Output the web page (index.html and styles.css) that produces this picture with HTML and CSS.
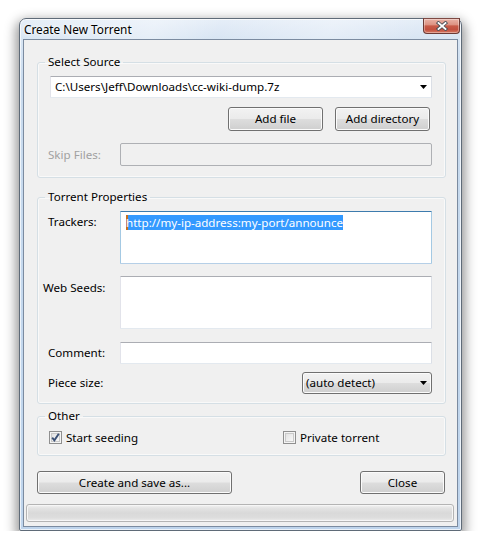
FILE: index.html
```html
<!DOCTYPE html>
<html>
<head>
<meta charset="utf-8">
<link rel="stylesheet" href="styles.css">
</head>
<body>
<div class="window">
  <div class="titlebar">
    <span class="title">Create New Torrent</span>
    <span class="close-x">
      <svg width="14" height="10" viewBox="0 0 14 10">
        <path d="M3.5 2 L10.5 8 M10.5 2 L3.5 8" stroke="#4a4f57" stroke-width="3.6" stroke-linecap="square"/>
        <path d="M3.5 2 L10.5 8 M10.5 2 L3.5 8" stroke="#ffffff" stroke-width="1.8" stroke-linecap="square"/>
      </svg>
    </span>
  </div>
  <div class="client">
    <fieldset class="group source">
      <legend>Select Source</legend>
      <div class="combo">
        <span class="combo-text">C:\Users\Jeff\Downloads\cc-wiki-dump.7z</span>
        <svg class="arrow" width="7" height="4" viewBox="0 0 7 4"><path d="M0 0 H7 L3.5 4 Z" fill="#000"/></svg>
      </div>
      <div class="btn-row">
        <button class="btn btn-file">Add file</button>
        <button class="btn btn-dir">Add directory</button>
      </div>
      <div class="row skip-row">
        <span class="lbl disabled">Skip Files:</span>
        <div class="textbox disabled-box"></div>
      </div>
    </fieldset>

    <fieldset class="group props">
      <legend>Torrent Properties</legend>
      <div class="row top-row">
        <span class="lbl lbl-trackers">Trackers:</span>
        <div class="textbox area focused"><span class="sel">http://my-ip-address:my-port/announce</span></div>
      </div>
      <div class="row top-row seeds-row">
        <span class="lbl lbl-seeds">Web Seeds:</span>
        <div class="textbox area"></div>
      </div>
      <div class="row comment-row">
        <span class="lbl">Comment:</span>
        <div class="textbox single"></div>
      </div>
      <div class="row piece-row">
        <span class="lbl">Piece size:</span>
        <div class="dropdown">
          <span>(auto detect)</span>
          <svg class="arrow" width="7" height="4" viewBox="0 0 7 4"><path d="M0 0 H7 L3.5 4 Z" fill="#000"/></svg>
        </div>
      </div>
    </fieldset>

    <fieldset class="group other">
      <legend>Other</legend>
      <div class="checks">
        <label class="check">
          <span class="box">
            <svg width="13" height="13" viewBox="0 0 13 13"><path d="M3.2 6.6 L5.4 9.4 L9.8 2.8" fill="none" stroke="#3b5075" stroke-width="1.9"/></svg>
          </span>
          <span>Start seeding</span>
        </label>
        <label class="check">
          <span class="box"></span>
          <span>Private torrent</span>
        </label>
      </div>
    </fieldset>

    <div class="actions">
      <button class="btn btn-create">Create and save as...</button>
      <button class="btn btn-close">Close</button>
    </div>
    <div class="progress"></div>
  </div>
</div>
</body>
</html>
```

FILE: styles.css
```css
* { box-sizing: border-box; }

html, body {
  margin: 0;
  padding: 0;
  background: #ffffff;
}

body {
  font-family: "Noto Sans", "Open Sans", sans-serif;
  font-size: 11.6px;
  color: #000;
}

.window {
  margin: 18px 0 0 19px;
  width: 443px;
  border: 1px solid #5f6b78;
  border-radius: 7px 7px 2px 2px;
  padding: 0 3px 3px 3px;
  background: linear-gradient(180deg, #e6eef8 0px, #d8e5f3 20px, #c9dbee 60px, #bed4ec 100%);
  box-shadow: 0 5px 12px 3px rgba(0, 0, 0, 0.42), inset 0 0 0 1px rgba(255, 255, 255, 0.7);
}

.titlebar {
  height: 20px;
  display: flex;
  justify-content: space-between;
  align-items: flex-start;
  margin-right: -2px;
  background: linear-gradient(115deg, rgba(255,255,255,0) 0%, rgba(255,255,255,0.35) 30%, rgba(255,255,255,0) 45%, rgba(255,255,255,0.3) 70%, rgba(255,255,255,0) 90%);
}

.title {
  line-height: 20px;
  padding-left: 1px;
  font-size: 11.8px;
  color: #000;
  text-shadow: 0 0 6px #ffffff, 0 0 3px #ffffff;
}

.close-x {
  margin-top: -1px;
  width: 37px;
  height: 16px;
  border: 1px solid #6b3b36;
  border-top-color: #7e4a44;
  border-radius: 0 0 4px 4px;
  background: linear-gradient(180deg, #eab2a6 0%, #dd9383 40%, #c85a48 50%, #c2503f 75%, #d67862 100%);
  box-shadow: inset 0 0 0 1px rgba(255, 255, 255, 0.35);
  display: flex;
  align-items: center;
  justify-content: center;
}

.close-x svg { display: block; }

.client {
  border: 1px solid #7b8ba0;
  background: #f0f0f0;
  padding: 0 0 4px 0;
}

.group {
  margin: 0 11px 0 13px;
  border: 1px solid #d5dfe5;
  border-radius: 3px;
  box-shadow: inset 0 0 0 1px rgba(255, 255, 255, 0.6);
  min-width: 0;
}

.group legend {
  padding: 0 3px;
  margin-left: -5px;
  line-height: 16px;
  color: #000;
}

.source {
  margin-top: 14px;
  padding: 6px 13px 11px 12px;
}

.props {
  margin-top: 11px;
  padding: 6px 13px 9px 12px;
}

.other {
  margin-top: 4px;
  padding: 6px 13px 10px 12px;
}

.combo {
  height: 22px;
  background: #fff;
  border: 1px solid;
  border-color: #abadb3 #dbdfe6 #e3e9ef #e2e3ea;
  border-radius: 1px;
  display: flex;
  align-items: center;
  justify-content: space-between;
  padding: 0 4px 0 4px;
}

.combo-text { line-height: 20px; white-space: nowrap; }

.arrow { display: block; flex: none; }

.btn-row {
  margin-top: 9px;
  display: flex;
  justify-content: flex-end;
  gap: 12px;
  padding-right: 2px;
}

.btn {
  font: inherit;
  color: #000;
  height: 24px;
  padding: 0;
  border: 1px solid #707070;
  border-radius: 3px;
  background: linear-gradient(180deg, #f2f2f2 0%, #ebebeb 48%, #dddddd 52%, #cfcfcf 100%);
  box-shadow: inset 0 0 0 1px #fbfbfb;
  text-align: center;
  line-height: 20px;
}

.btn-file, .btn-dir { width: 95px; }

.row {
  display: flex;
  align-items: center;
}

.lbl {
  width: 70px;
  flex: none;
  margin-left: -2px;
  margin-right: 2px;
  line-height: 16px;
  white-space: nowrap;
}

.lbl.disabled { color: #a1a1a1; }

.skip-row { margin-top: 12px; }

.textbox {
  flex: 1;
  background: #fff;
  border: 1px solid;
  border-color: #abadb3 #dbdfe6 #e3e9ef #e2e3ea;
  border-radius: 1px;
}

.disabled-box {
  height: 23px;
  background: #f0f0f0;
  border-color: #aeb0b4;
  border-radius: 2px;
}

.top-row { align-items: flex-start; }

.area {
  height: 53px;
  padding: 3px 0 0 5px;
  line-height: 16px;
}

.focused {
  border-color: #3d7bad #a4c9e3 #b5cfe7 #a4c9e3;
}

.sel {
  background: #3399ff;
  color: #fff;
  box-shadow: inset 2px 0 0 #c8701e;
  padding: 0;
  white-space: nowrap;
}

.lbl-trackers { margin-top: 3px; }

.seeds-row { margin-top: 12px; }

.lbl-seeds {
  margin-top: 4px;
  margin-left: -7px;
  width: 75px;
}

.comment-row { margin-top: 13px; }

.single { height: 22px; }

.piece-row {
  margin-top: 8px;
  justify-content: space-between;
}

.dropdown {
  width: 130px;
  height: 22px;
  border: 1px solid #707070;
  border-radius: 3px;
  background: linear-gradient(180deg, #f2f2f2 0%, #ebebeb 48%, #dddddd 52%, #cfcfcf 100%);
  box-shadow: inset 0 0 0 1px #fbfbfb;
  display: flex;
  align-items: center;
  justify-content: space-between;
  padding: 0 4px 0 3px;
  line-height: 20px;
}

.checks {
  display: grid;
  grid-template-columns: 234px auto;
  margin-left: -1px;
  height: 15px;
  align-items: center;
}

.check {
  display: flex;
  align-items: center;
  gap: 4px;
  line-height: 15px;
}

.box {
  width: 13px;
  height: 13px;
  flex: none;
  border: 1px solid #8f8f8f;
  background: linear-gradient(135deg, #dcdcdc 0%, #f4f4f4 70%, #ffffff 100%);
  box-shadow: inset 0 0 0 1px #f4f4f4, inset 0 0 0 2px #c9c9c9;
  position: relative;
}

.box svg {
  position: absolute;
  left: -1px;
  top: -1px;
}

.actions {
  margin: 15px 12px 0 13px;
  display: flex;
  justify-content: space-between;
}

.btn-create { width: 195px; height: 23px; }
.btn-close { width: 85px; height: 23px; }

.progress {
  margin: 10px 3px 0 2px;
  height: 18px;
  border: 1px solid #b4b4b4;
  border-radius: 3px;
  background: linear-gradient(180deg, #f3f3f3 0%, #e3e3e3 20%, #d9d9d9 50%, #dddddd 80%, #ececec 100%);
  box-shadow: inset 0 0 0 1px #f6f6f6;
}
```
